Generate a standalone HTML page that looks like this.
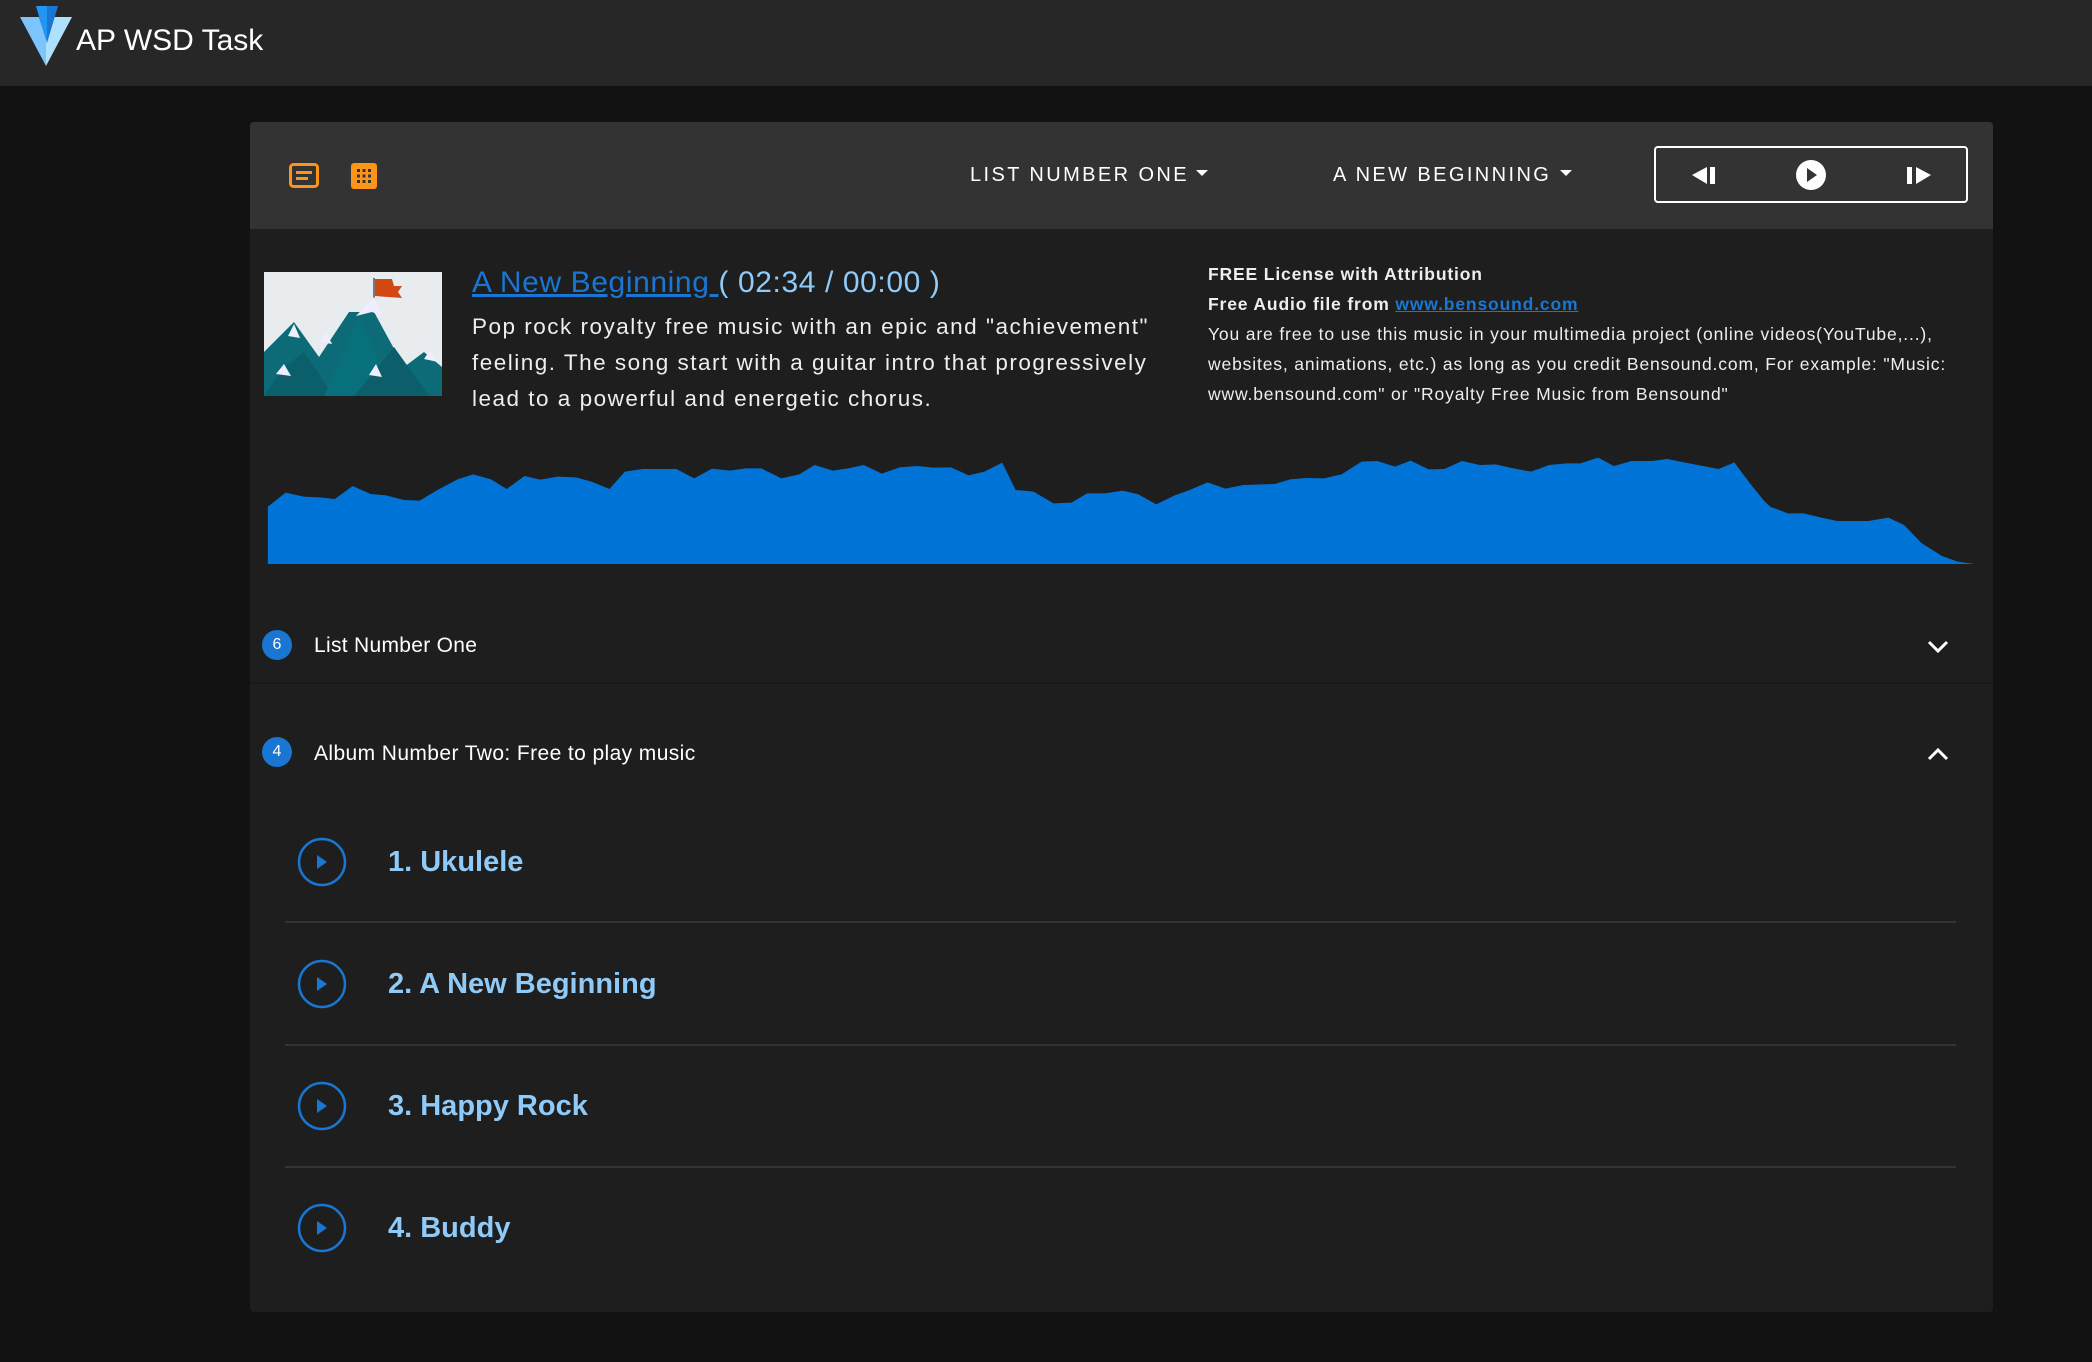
<!DOCTYPE html>
<html><head><meta charset="utf-8"><style>
*{margin:0;padding:0;box-sizing:border-box}
body{width:2092px;height:1362px;background:#121212;font-family:"Liberation Sans",sans-serif;color:#fff;position:relative;overflow:hidden}
.a{position:absolute;white-space:nowrap}
</style></head><body>
<div class="a" style="left:0;top:0;width:2092px;height:86px;background:#272727"></div>
<svg class="a" style="left:19px;top:5px" width="54" height="62" viewBox="0 0 54 62">
<polygon points="1,12 20,12 27,34 27,61" fill="#7cc4fb"/>
<polygon points="53,12 34,12 27,34 27,61" fill="#aee0ff"/>
<polygon points="17,1 39,1 28,38" fill="#1976d2"/>
<polygon points="17,1 28,1 28,38" fill="#2196f3"/>
</svg>
<div class="a" style="left:76px;top:24px;font-size:30px">AP WSD Task</div>

<div class="a" style="left:250px;top:122px;width:1743px;height:1190px;background:#1e1e1e;border-radius:4px;overflow:hidden">
 <div class="a" style="left:0;top:0;width:1743px;height:107px;background:#333"></div>
</div>
<svg class="a" style="left:289px;top:163px" width="90" height="26">
<rect x="1.5" y="1.5" width="27" height="22" rx="3" fill="none" stroke="#ff9518" stroke-width="3"/>
<rect x="7" y="8" width="16" height="3" fill="#ff9518"/><rect x="7" y="14" width="12" height="3" fill="#ff9518"/>
<rect x="62" y="0" width="26" height="26" rx="3" fill="#ff9518"/>
<g fill="#333"><rect x="68" y="6" width="3" height="3"/><rect x="73.5" y="6" width="3" height="3"/><rect x="79" y="6" width="3" height="3"/>
<rect x="68" y="11.5" width="3" height="3"/><rect x="73.5" y="11.5" width="3" height="3"/><rect x="79" y="11.5" width="3" height="3"/>
<rect x="68" y="17" width="3" height="3"/><rect x="73.5" y="17" width="3" height="3"/><rect x="79" y="17" width="3" height="3"/></g>
</svg>
<div class="a" style="left:970px;top:164px;font-size:20px;letter-spacing:2.4px">LIST NUMBER ONE</div>
<svg class="a" style="left:1196px;top:170px" width="12" height="8"><polygon points="0,0 12,0 6,6" fill="#fff"/></svg>
<div class="a" style="left:1333px;top:164px;font-size:20px;letter-spacing:2.4px">A NEW BEGINNING</div>
<svg class="a" style="left:1560px;top:170px" width="12" height="8"><polygon points="0,0 12,0 6,6" fill="#fff"/></svg>
<div class="a" style="left:1654px;top:146px;width:314px;height:57px;border:2px solid #fff;border-radius:4px"></div>
<svg class="a" style="left:1690px;top:160px" width="250" height="32">
<polygon points="2,15 17,7 17,24" fill="#fff"/><rect x="20" y="7" width="5" height="17" fill="#fff"/>
<circle cx="121" cy="15" r="15" fill="#fff"/><polygon points="117,8 127,15 117,22" fill="#333"/>
<rect x="217" y="7" width="5" height="17" fill="#fff"/><polygon points="241,15 226,7 226,24" fill="#fff"/>
</svg>

<svg class="a" style="left:264px;top:272px" width="178" height="124" viewBox="0 0 178 124">
<rect width="178" height="124" fill="#e8ecee"/>
<line x1="110" y1="6" x2="110" y2="42" stroke="#555" stroke-width="1.5"/>
<polygon points="111,7 128,7 130,14 138,14 134,20 138,26 111,24" fill="#d24914"/>
<polygon points="0,124 0,80 30,50 55,85 85,40 110,40 140,95 160,80 178,95 178,124" fill="#0d6b78"/>
<polygon points="0,124 20,95 40,80 70,124" fill="#0a5f6b"/>
<polygon points="60,124 95,45 130,124" fill="#08707c"/>
<polygon points="90,124 130,75 165,124" fill="#0b5e6a"/>
<polygon points="92,44 110,25 118,44 108,40" fill="#eef"/>
<polygon points="24,64 30,52 36,66" fill="#eef"/><polygon points="55,70 62,60 68,72" fill="#eef"/>
<polygon points="12,102 20,92 27,104" fill="#eef"/><polygon points="105,103 112,92 118,105" fill="#eef"/>
<polygon points="160,87 166,78 174,90" fill="#eef"/>
</svg>
<div class="a" style="left:472px;top:266px;font-size:30px;letter-spacing:0.6px"><span style="color:#1976d2;text-decoration:underline">A New Beginning </span><span style="color:#90caf9">( 02:34 / 00:00 )</span></div>
<div class="a" style="left:472px;top:309px;font-size:22.5px;line-height:36px;letter-spacing:1.5px;color:#eee">Pop rock royalty free music with an epic and "achievement"<br>feeling. The song start with a guitar intro that progressively<br>lead to a powerful and energetic chorus.</div>
<div class="a" style="left:1208px;top:259px;font-size:17.5px;line-height:30px;letter-spacing:0.85px;color:#eee"><b>FREE License with Attribution</b><br><b>Free Audio file from <span style="color:#1976d2;text-decoration:underline">www.bensound.com</span></b><br>You are free to use this music in your multimedia project (online videos(YouTube,...),<br>websites, animations, etc.) as long as you credit Bensound.com, For example: "Music:<br>www.bensound.com" or "Royalty Free Music from Bensound"</div>

<svg class="a" style="left:250px;top:440px" width="1750" height="140" viewBox="0 0 1568 420" preserveAspectRatio="none">
<polygon fill="#0073d6" points="16,372 16,200 32,158 48,170 62,172 76,177 92,138 108,162 122,166 138,180 152,182 168,150 186,118 200,103 216,118 230,147 246,108 260,119 276,110 292,112 306,125 322,147 336,95 352,87 382,87 398,115 414,86 430,92 444,85 458,85 476,115 492,103 506,75 522,92 536,85 550,75 566,101 582,82 598,78 612,83 628,82 644,106 658,95 674,68 686,150 702,155 720,190 736,188 750,160 766,160 782,152 796,163 812,193 828,167 842,150 858,127 874,146 890,135 918,132 932,118 946,114 962,115 978,103 996,65 1010,63 1026,80 1040,62 1056,88 1070,87 1086,63 1102,75 1116,73 1132,85 1148,95 1164,75 1180,70 1192,70 1208,53 1222,78 1238,63 1256,63 1270,57 1286,68 1300,77 1316,87 1330,67 1344,130 1356,180 1362,200 1378,220 1392,220 1408,233 1422,243 1450,243 1468,233 1482,255 1498,310 1516,348 1530,365 1545,372"/>
</svg>

<div class="a" style="left:250px;top:682px;width:1743px;height:2px;background:#181818"></div>
<div class="a" style="left:262px;top:630px;width:30px;height:30px;border-radius:50%;background:#1976d2;font-size:16px;text-align:center;line-height:30px">6</div>
<div class="a" style="left:314px;top:634px;font-size:21px;letter-spacing:0.3px">List Number One</div>
<div class="a" style="left:262px;top:737px;width:30px;height:30px;border-radius:50%;background:#1976d2;font-size:16px;text-align:center;line-height:30px">4</div>
<div class="a" style="left:314px;top:742px;font-size:21px;letter-spacing:0.4px">Album Number Two: Free to play music</div>
<svg class="a" style="left:1926px;top:638px" width="24" height="124" fill="none" stroke="#fff" stroke-width="3">
<polyline points="3,4 12,13 21,4"/><polyline points="3,121 12,112 21,121"/>
</svg>

<div class="a" style="left:285px;top:921px;width:1671px;height:2px;background:#333"></div>
<div class="a" style="left:285px;top:1044px;width:1671px;height:2px;background:#333"></div>
<div class="a" style="left:285px;top:1166px;width:1671px;height:2px;background:#333"></div>
<svg class="a" style="left:296px;top:836px" width="52" height="420" viewBox="0 0 52 420">
<g fill="none" stroke="#1976d2" stroke-width="2.5"><circle cx="26" cy="26" r="23"/><circle cx="26" cy="148" r="23"/><circle cx="26" cy="270" r="23"/><circle cx="26" cy="392" r="23"/></g>
<g fill="#1976d2"><polygon points="21,19 31,26 21,33"/><polygon points="21,141 31,148 21,155"/><polygon points="21,263 31,270 21,277"/><polygon points="21,385 31,392 21,399"/></g>
</svg>
<div class="a" style="left:388px;top:846px;font-size:29px;color:#90caf9;font-weight:bold">1. Ukulele</div>
<div class="a" style="left:388px;top:968px;font-size:29px;color:#90caf9;font-weight:bold">2. A New Beginning</div>
<div class="a" style="left:388px;top:1090px;font-size:29px;color:#90caf9;font-weight:bold">3. Happy Rock</div>
<div class="a" style="left:388px;top:1212px;font-size:29px;color:#90caf9;font-weight:bold">4. Buddy</div>
</body></html>
